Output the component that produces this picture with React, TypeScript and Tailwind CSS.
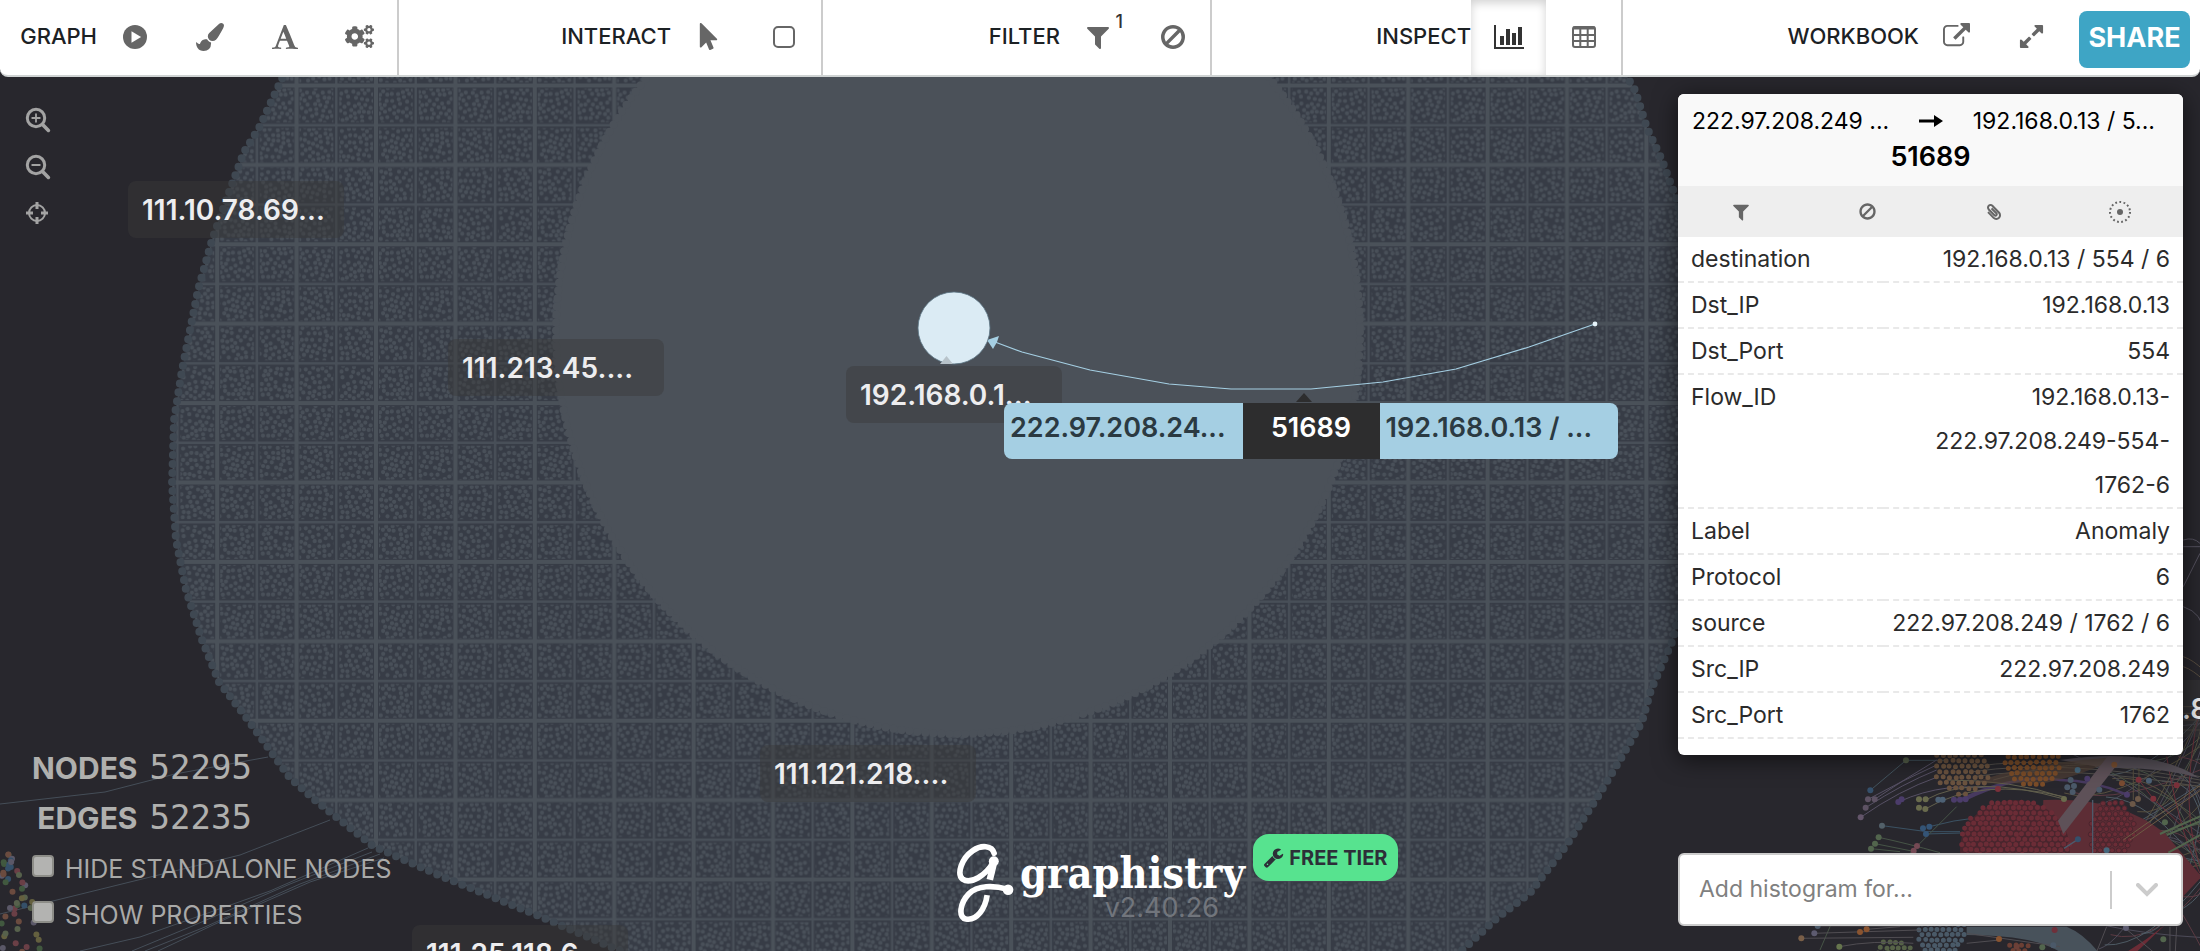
import type { ReactNode } from "react";
import { FaCogs, FaPaperclip } from "react-icons/fa";

/* ---------- icons ---------- */

const paths = {
  brush:
    "M1615 0q70 0 122.5 46.5t52.5 116.5q0 63-45 151-332 629-465 752-97 91-218 91-126 0-216.5-92.5t-90.5-219.5q0-128 92-212l638-579q59-54 130-54zm-909 1034q39 76 106.5 130t150.5 76l1 71q4 213-129.5 347t-348.5 134q-123 0-218-46.5t-152.5-127.5-86.5-183-29-220q7 5 41 30t62 44.5 59 36.5 46 17q41 0 55-37 25-66 57.5-112.5t69.5-76 88-47.5 103-25.5 125-10.5z",
  font: "M789 559l-170 450q33 0 136.5 2t160.5 2q19 0 57-2-87-253-184-452zm-725 1105l2-79q23-7 56-12.5t57-10.5 49.5-14.5 44.5-29 31-50.5l237-616 280-724h128q8 14 11 21l205 480q33 78 106 257.5t114 274.5q15 34 58 144.5t72 168.5q20 45 35 57 19 15 88 29.5t84 20.5q6 38 6 57 0 4-.5 13t-.5 13q-63 0-190-8t-191-8q-76 0-215 7t-178 8q0-43 4-78l131-28q1 0 12.5-2.5t15.5-3.5 14.5-4.5 15-6.5 11-8 9-11 2.5-14q0-16-31-96.5t-72-177.5-42-100l-450-2q-26 58-76.5 195.5t-50.5 162.5q0 22 14 37.5t43.5 24.5 48.5 13.5 57 8.5 41 4q1 19 1 58 0 9-2 27-58 0-174.5-10t-174.5-10q-8 0-26.5 4t-21.5 4q-80 14-188 14z",
  pointer:
    "M1453 1043q31 30 14 69-17 40-59 40h-382l201 476q10 25 0 49t-34 35l-177 75q-25 10-49 0t-35-34l-191-452-312 312q-19 19-45 19-12 0-24-5-40-17-40-59v-1504q0-42 40-59 12-5 24-5 27 0 45 19z",
  filter:
    "M1595 295q17 41-14 70l-493 493v742q0 42-39 59-13 5-25 5-27 0-45-19l-256-256q-19-19-19-45v-486l-493-493q-31-29-14-70 17-39 59-39h1280q42 0 59 39z",
  ban: "M1440 893q0-161-87-295l-754 753q137 89 297 89 111 0 211.5-43.5t173.5-116.5 116-174.5 43-212.5zm-999 299l755-754q-135-91-300-91-148 0-273 73t-198 199-73 274q0 162 89 299zm1223-299q0 157-61 300t-163.5 246-245 164-298.5 61-298.5-61-245-164-163.5-246-61-300 61-299.5 163.5-245.5 245-164 298.5-61 298.5 61 245 164 163.5 245.5 61 299.5z",
  external:
    "M1408 928v320q0 119-84.5 203.5t-203.5 84.5h-832q-119 0-203.5-84.5t-84.5-203.5v-832q0-119 84.5-203.5t203.5-84.5h704q14 0 23 9t9 23v64q0 14-9 23t-23 9h-704q-66 0-113 47t-47 113v832q0 66 47 113t113 47h832q66 0 113-47t47-113v-320q0-14 9-23t23-9h64q14 0 23 9t9 23zm384-864v512q0 26-19 45t-45 19-45-19l-176-176-652 652q-10 10-23 10t-23-10l-114-114q-10-10-10-23t10-23l652-652-176-176q-19-19-19-45t19-45 45-19h512q26 0 45 19t19 45z",
  expand:
    "M883 1056q0 13-10 23l-332 332 144 144q19 19 19 45t-19 45-45 19h-448q-26 0-45-19t-19-45v-448q0-26 19-45t45-19 45 19l144 144 332-332q10-10 23-10t23 10l114 114q10 10 10 23zm781-864v448q0 26-19 45t-45 19-45-19l-144-144-332 332q-10 10-23 10t-23-10l-114-114q-10-10-10-23t10-23l332-332-144-144q-19-19-19-45t19-45 45-19h448q26 0 45 19t19 45z",
  wrench:
    "M448 1472q0-26-19-45t-45-19-45 19-19 45 19 45 45 19 45-19 19-45zm644-420l-682 682q-37 37-90 37-52 0-91-37l-106-108q-38-36-38-90 0-53 38-91l681-681q39 98 114.5 173.5t173.5 114.5zm634-435q0 39-23 106-47 134-164.5 217.5t-258.5 83.5q-185 0-316.5-131.5t-131.5-316.5 131.5-316.5 316.5-131.5q58 0 121.5 16.5t107.5 46.5q16 11 16 28t-16 28l-293 169v224l193 107q5-3 79-48.5t135.5-81 70.5-35.5q15 0 23.5 10t8.5 25z",
};

function Glyph({ d, className }: { d: string; className: string }) {
  return (
    <svg viewBox="0 0 1792 1792" fill="currentColor" className={className} aria-hidden="true">
      <path d={d} />
    </svg>
  );
}

function PlayIcon() {
  return (
    <svg viewBox="0 0 24 24" className="size-6" aria-hidden="true">
      <circle cx="12" cy="12" r="12" fill="currentColor" />
      <path d="M8.5 6.2v11.6l9.6-5.8z" fill="#fff" />
    </svg>
  );
}

function SquareIcon() {
  return (
    <svg viewBox="0 0 22 22" className="size-[22px]" fill="none" stroke="currentColor" strokeWidth="2" aria-hidden="true">
      <rect x="1" y="1" width="20" height="20" rx="4" />
    </svg>
  );
}

function BarsIcon() {
  return (
    <svg viewBox="0 0 30 24" className="h-6 w-[30px]" fill="currentColor" aria-hidden="true">
      <path d="M0 0h2v22h28v2H0zM6 11h4v9H6zM12 4h4v16h-4zM18 8h4v12h-4zM24 2h4v18h-4z" />
    </svg>
  );
}

function TableIcon() {
  return (
    <svg viewBox="0 0 24 22" className="h-[22px] w-6" fill="none" stroke="currentColor" aria-hidden="true">
      <rect x="1" y="1" width="22" height="20" rx="2" strokeWidth="2" />
      <path d="M1 2h22" strokeWidth="3" />
      <path d="M8.3 3v18M15.7 3v18M1 9h22M1 15h22" strokeWidth="2" />
    </svg>
  );
}

function MagnifierIcon({ plus }: { plus?: boolean }) {
  return (
    <svg viewBox="0 0 26 26" className="size-[26px]" fill="none" stroke="currentColor" strokeLinecap="round" aria-hidden="true">
      <circle cx="11" cy="11" r="8.7" strokeWidth="3" />
      <path d="M17.8 17.8l5.6 5.6" strokeWidth="3.6" />
      <path d={plus ? "M7.2 11h7.6M11 7.2v7.6" : "M7.2 11h7.6"} strokeWidth="1.8" />
    </svg>
  );
}

function CrosshairIcon() {
  return (
    <svg viewBox="0 0 24 24" className="size-6" fill="none" stroke="currentColor" aria-hidden="true">
      <circle cx="12" cy="12" r="8" strokeWidth="2" />
      <path d="M12 1v7M12 16v7M1 12h7M16 12h7" strokeWidth="3" />
    </svg>
  );
}

function NeighborhoodIcon() {
  return (
    <svg viewBox="0 0 24 24" className="size-6" aria-hidden="true">
      <circle cx="12" cy="12" r="10" fill="none" stroke="currentColor" strokeWidth="2" strokeDasharray="1.8 2.4" />
      <circle cx="12" cy="12" r="3" fill="currentColor" />
    </svg>
  );
}

/* ---------- graph canvas ---------- */

function rng(seed: number) {
  let s = seed;
  return () => {
    s = (s * 1664525 + 1013904223) % 4294967296;
    return s / 4294967296;
  };
}

const dot = (x: number, y: number, r: number) =>
  `M${(x - r).toFixed(1)} ${y.toFixed(1)}a${r} ${r} 0 1 0 ${2 * r} 0a${r} ${r} 0 1 0 ${-2 * r} 0`;

const TILE = 158.8;

/* dart throwing on a torus, so that the tile repeats without seams */
function tileDots() {
  const rand = rng(7);
  const placed: [number, number][] = [];
  let d = "";
  for (let i = 0; i < 16000; i++) {
    const x = rand() * TILE;
    const y = rand() * TILE;
    const free = placed.every(([px, py]) => {
      const ax = Math.abs(px - x);
      const ay = Math.abs(py - y);
      const dx = Math.min(ax, TILE - ax);
      const dy = Math.min(ay, TILE - ay);
      return dx * dx + dy * dy > 20;
    });
    if (free) {
      placed.push([x, y]);
      d += dot(x, y, 2.1);
    }
  }
  return d;
}

function clusterDots(cx: number, cy: number, rx: number, ry: number, gap: number, r: number, seed: number) {
  const rand = rng(seed);
  let d = "";
  for (let y = -ry, row = 0; y <= ry; y += gap * 0.87, row++) {
    for (let x = -rx + (row % 2 ? gap / 2 : 0); x <= rx; x += gap) {
      if ((x * x) / (rx * rx) + (y * y) / (ry * ry) <= 1) {
        d += dot(cx + x + (rand() - 0.5) * 3, cy + y + (rand() - 0.5) * 3, r);
      }
    }
  }
  return d;
}

const TILE_DOTS = tileDots();
const GRID = "M0 0H158.8M0 39.7H158.8M0 79.4H158.8M0 119.1H158.8M0 158.8H158.8M0 0V158.8M39.7 0V158.8M79.4 0V158.8M119.1 0V158.8M158.8 0V158.8";
const GRID_MAIN = "M0 0H158.8M0 79.4H158.8M0 158.8H158.8M0 0V158.8M79.4 0V158.8M158.8 0V158.8";

const BLOB =
  "M286 70L272 100L259 128L244 152L228 195L212 240L198 290L182 370L174 420L172 484L176 540L186 590L202 640L219 682L248 720L290 778L316 801L373 846L436 874L539 916L632 956H1456L1497 918L1530 893L1566 846L1597 798L1620 760L1642 722L1651 690L1673 640L1697 540L1703 420L1697 300L1677 200L1662 160L1647 128L1635 90L1623 70Z";

const SMALL_NODES: [number, number, string][] = [
  [438, 181, "#56614b"], [331, 271, "#35506b"], [324, 298, "#5d5263"], [344, 298, "#5d5263"], [317, 323, "#5d5263"],
  [302, 352, "#63556a"], [415, 306, "#4b3c6a"], [425, 298, "#4b3c6a"], [477, 298, "#696b4d"], [497, 298, "#696b4d"],
  [477, 323, "#696b4d"], [496, 327, "#696b4d"], [535, 299, "#4d6175"], [548, 299, "#4d6175"], [582, 299, "#4b3c6a"],
  [600, 299, "#4b3c6a"], [617, 298, "#4b3c6a"], [366, 377, "#526069"], [489, 385, "#345476"], [508, 380, "#345476"],
  [498, 402, "#345476"], [356, 412, "#52654d"], [345, 431, "#52654d"], [333, 446, "#52654d"], [471, 438, "#754954"],
  [461, 452, "#754954"], [714, 267, "#7b303a"], [912, 297, "#696b4d"], [932, 240, "#4b5969"], [922, 262, "#4b5969"],
  [942, 258, "#4b5969"], [938, 276, "#4b5969"], [953, 210, "#45667b"], [982, 236, "#4b3c6a"], [1018, 269, "#4b5969"],
  [1086, 250, "#7a4c32"], [1101, 284, "#4b3c6a"], [1136, 239, "#7b303a"], [1167, 242, "#4d6175"], [1134, 297, "#6c5848"],
  [1118, 312, "#6c5848"], [1180, 296, "#7b303a"], [1250, 256, "#7b303a"], [1215, 367, "#52654d"], [1063, 194, "#7a5032"],
  [954, 418, "#35506b"], [1040, 451, "#45667b"], [173, 678, "#4b5969"], [163, 700, "#5d5b70"], [124, 715, "#7a5f48"],
  [300, 696, "#8a5430"], [320, 688, "#8a5430"], [238, 740, "#66754d"], [884, 690, "#6f303a"], [717, 717, "#8a5430"],
  [770, 740, "#6c4038"], [847, 742, "#52654d"], [880, 736, "#4b5969"], [1098, 684, "#5d5b70"], [1210, 718, "#52654d"],
];

const NODE_TINTS = ["#5b5868", "#57614c", "#6b4b3f", "#41583f", "#355069", "#64603f", "#6a3f46"];

function LeftSpeckles() {
  const rand = rng(31);
  const items: ReactNode[] = [];
  for (let i = 0; i < 46; i++) {
    const y = 850 + rand() * 104;
    const x = rand() * Math.min(40, 8 + (y - 850) * 0.5);
    items.push(<circle key={i} cx={x.toFixed(1)} cy={y.toFixed(1)} r="3" fill={NODE_TINTS[i % NODE_TINTS.length]} />);
  }
  return <>{items}</>;
}

function RightEdges() {
  const rand = rng(11);
  const tints = ["#4c4a57", "#4d5a63", "#5b3a42", "#4a5548", "#57503f"];
  const items: ReactNode[] = [];
  for (let i = 0; i < 46; i++) {
    const x1 = 900 + rand() * 420;
    const y1 = 150 + rand() * 600;
    items.push(
      <path
        key={i}
        d={`M${x1.toFixed(0)} ${y1.toFixed(0)}Q${(x1 + 130).toFixed(0)} ${(y1 - 60 + rand() * 120).toFixed(0)} 1330 ${(rand() * 760).toFixed(0)}`}
        stroke={tints[i % tints.length]}
      />,
    );
  }
  return <>{items}</>;
}

function GraphCanvas() {
  return (
    <svg
      viewBox="0 76 2200 875"
      preserveAspectRatio="xMidYMin slice"
      className="absolute inset-0 size-full"
      role="img"
      aria-label="Network graph"
    >
      <defs>
        <pattern id="nodes" x="376" y="85.5" width={TILE} height={TILE} patternUnits="userSpaceOnUse">
          <rect width={TILE} height={TILE} fill="#373c46" />
          <path d={TILE_DOTS} fill="#495059" />
          <path d={GRID} stroke="#373c46" strokeWidth="6" />
          <path d={GRID} stroke="#484f58" strokeWidth="2.4" />
          <path d={GRID_MAIN} stroke="#4a5159" strokeWidth="4" />
        </pattern>
      </defs>
      <rect y="76" width="2200" height="875" fill="#28272d" />

      {/* faint long edges, lower left */}
      <g fill="none" stroke="#454e58" strokeWidth="1">
        <path d="M0 804L105 792L175 774L268 757M0 914L130 882L240 855L330 820M80 951L140 937L270 891L368 848M132 951L190 927L290 884L372 852M145 951L205 927L300 884L380 854M158 951L230 917L310 882L384 858" />
      </g>
      <LeftSpeckles />

      <path d={BLOB} fill="url(#nodes)" />
      <path d={BLOB} fill="none" stroke="#3f4852" strokeWidth="8" strokeLinecap="round" strokeDasharray="0 9" />

      <circle cx="958" cy="332" r="403" fill="#4b5159" />
      <circle cx="958" cy="332" r="402" fill="none" stroke="#4b5159" strokeWidth="8" strokeLinecap="round" strokeDasharray="0 8" />

      {/* neighbouring communities behind the inspector */}
      <g transform="translate(1760 700) scale(0.3333)">
        <g fill="none" strokeWidth="3">
          <path d="M1270 -480Q1300 -490 1320 -470M1270 -460H1320M1270 -340L1320 -440M1270 -280Q1330 -260 1330 -200" stroke="#55525f" />
          <path d="M1270 -130Q1300 -120 1330 -90M1270 -100Q1300 -90 1330 -60M1270 20H1330M1270 40H1330M1270 60H1330M1270 90H1330" stroke="#574c40" />
          <RightEdges />
          <path d="M331 271L438 181H560" stroke="#43545e" />
          <path d="M302 352Q420 270 530 232M317 323Q430 250 530 210M324 298Q430 240 530 195M344 298Q430 240 530 180M415 306Q560 240 720 270" stroke="#565064" />
          <path d="M600 299Q760 220 900 240Q1000 240 1101 284M617 298Q760 230 860 236" stroke="#47395f" strokeWidth="7" />
          <path d="M496 300Q640 220 912 297M496 327Q660 230 912 290M560 240Q760 240 905 290" stroke="#615f4c" />
          <path d="M366 377L500 395H600M508 380Q580 360 660 352M498 402L640 398" stroke="#3b5263" />
          <path d="M356 412Q440 430 540 458M345 431L470 456M333 446L420 455M590 320L440 470M240 610L180 750" stroke="#465446" />
          <path d="M640 200Q900 160 1320 240M640 215Q900 175 1320 250M640 230Q900 190 1320 260M700 240Q1000 150 1320 230" stroke="#514e4a" />
          <path d="M1120 170V300M1137 170V300" stroke="#57503f" />
          <path d="M1320 20Q1250 340 1330 520M1220 170Q1260 400 1320 520M1180 296L1320 430M1136 239L1180 296" stroke="#693039" />
        </g>
        <path d="M900 180Q1180 140 1320 235Q1200 200 1040 205Z" fill="#565058" />
        <path d="M640 250Q780 190 1080 170Q960 230 850 250Z" fill="#574537" opacity="0.6" />
        <path d={clusterDots(605, 200, 84, 84, 19, 7.5, 3)} fill="#6b533f" />
        <path d={clusterDots(815, 182, 90, 78, 19, 7.5, 4)} fill="#7a4c28" />
        <path d="M850 300Q1080 290 1215 400L1325 530L1250 610H840Z" fill="#5d2d35" />
        <ellipse cx="765" cy="450" rx="165" ry="150" fill="#48252d" />
        <path d={clusterDots(765, 450, 168, 158, 18, 7.5, 5)} fill="#6b2c36" />
        <path d={clusterDots(1055, 390, 70, 96, 18, 7.5, 6)} fill="#6b2c36" stroke="#48252d" strokeWidth="3" />
        <path d="M894 362L1042 170H1090L910 402Z" fill="#5e5158" />
        <path d="M998 300V460M912 445L954 418" fill="none" stroke="#4d5a6b" strokeWidth="4" />
        <path d="M1330 345L1200 402M1330 360L1220 405M1330 400L1225 458" fill="none" stroke="#52654d" strokeWidth="6" />
        <path d="M1090 420L1330 250M1110 420L1330 265" fill="none" stroke="#6d5b44" strokeWidth="3" />

        <path d="M620 680H920Q970 700 1015 756H900Q820 705 620 705Z" fill="#48525b" />
        <path d={clusterDots(545, 690, 76, 80, 18, 7.5, 8)} fill="#4a5a68" />
        <path d={clusterDots(400, 760, 56, 48, 18, 7.5, 9)} fill="#566247" />
        <path d={clusterDots(775, 745, 34, 24, 18, 7.5, 10)} fill="#6c3f34" />
        <path d="M1100 756Q1160 720 1215 675L1130 756Z" fill="#6b2c36" />
        <path
          d="M173 678H480M163 700L480 690M124 715L460 712M320 688L420 680M238 740Q340 720 460 730M620 700L900 740M620 730L720 720M1010 756L1040 680M1180 756L1090 680M1230 756V680M1246 756L1250 680"
          fill="none"
          stroke="#504d52"
          strokeWidth="3"
        />
        {SMALL_NODES.map(([x, y, c]) => (
          <circle key={`${x}-${y}`} cx={x} cy={y} r="9" fill={c} />
        ))}
      </g>

      {/* selected edge */}
      <path
        d="M995 342L1022 352L1090 370L1169 384L1231 389H1311L1383 382L1456 369L1529 347L1595 324"
        fill="none"
        stroke="#a5cfe3"
        strokeWidth="1.2"
      />
      <path d="M987 340L999 336L997 342L993 349Z" fill="#a5cfe3" />
      <circle cx="1595" cy="324" r="2.4" fill="#e6f3fa" />
      <circle cx="954" cy="328" r="36" fill="#dbebf4" stroke="#5d7685" strokeWidth="0.8" />
      <path d="M940 364L946.500 356L953 364Z" fill="#b8c3ca" />
      <path d="M1296 402L1304 393L1312 402Z" fill="#2d2d2e" />
    </svg>
  );
}

function NodeLabel({ className, children }: { className: string; children: ReactNode }) {
  return (
    <div
      className={`absolute flex h-[57px] w-[216px] items-center rounded-lg bg-[#3a3a3a]/45 px-[14px] text-[28px] font-semibold whitespace-nowrap text-[#ededef] ${className}`}
    >
      {children}
    </div>
  );
}

/* ---------- toolbar ---------- */

function ToolGroup({ label, children, last }: { label: string; children: ReactNode; last?: boolean }) {
  return (
    <div className={`flex items-stretch justify-end ${last ? "" : "border-r-2 border-[#cccccc]"}`}>
      <span className="flex items-center pb-[2px] text-[22px] font-medium text-[#1c2124]">{label}</span>
      {children}
    </div>
  );
}

function Tool({ name, active, children }: { name: string; active?: boolean; children: ReactNode }) {
  return (
    <button
      type="button"
      aria-label={name}
      className={`relative flex w-[75px] items-center justify-center pb-[2px] ${
        active ? "text-[#333333] shadow-[inset_0_3px_10px_rgba(0,0,0,0.18)]" : "text-[#666666]"
      }`}
    >
      {children}
    </button>
  );
}

function Toolbar() {
  return (
    <header className="relative z-10 grid h-[77px] grid-cols-[399fr_424fr_389fr_411fr_577fr] rounded-b-lg border-b-2 border-[#cfd3d3] bg-white">
      <ToolGroup label="GRAPH">
        <Tool name="Play"><PlayIcon /></Tool>
        <Tool name="Appearance"><Glyph d={paths.brush} className="size-7" /></Tool>
        <Tool name="Labels"><Glyph d={paths.font} className="size-7" /></Tool>
        <Tool name="Settings"><FaCogs className="size-[29px]" /></Tool>
      </ToolGroup>
      <ToolGroup label="INTERACT">
        <Tool name="Select"><Glyph d={paths.pointer} className="size-[27px]" /></Tool>
        <Tool name="Marquee"><SquareIcon /></Tool>
      </ToolGroup>
      <ToolGroup label="FILTER">
        <Tool name="Filters">
          <Glyph d={paths.filter} className="size-7" />
          <span className="absolute top-[14px] right-3 text-[18px] leading-4 font-medium text-[#333333]">1</span>
        </Tool>
        <Tool name="Exclusions"><Glyph d={paths.ban} className="size-7" /></Tool>
      </ToolGroup>
      <ToolGroup label="INSPECT">
        <Tool name="Histograms" active><BarsIcon /></Tool>
        <Tool name="Table"><TableIcon /></Tool>
      </ToolGroup>
      <ToolGroup label="WORKBOOK" last>
        <Tool name="Open in new window"><Glyph d={paths.external} className="size-[27px]" /></Tool>
        <Tool name="Full screen"><Glyph d={paths.expand} className="size-[27px]" /></Tool>
        <button
          type="button"
          className="mx-[10px] mt-[11px] h-[57px] w-[111px] rounded-lg bg-[#3ea5c5] pb-[2px] text-[27px] font-bold text-white"
        >
          SHARE
        </button>
      </ToolGroup>
    </header>
  );
}

/* ---------- side panels ---------- */

const rows: [string, string][] = [
  ["destination", "192.168.0.13 / 554 / 6"],
  ["Dst_IP", "192.168.0.13"],
  ["Dst_Port", "554"],
  ["Flow_ID", "192.168.0.13-222.97.208.249-554-1762-6"],
  ["Label", "Anomaly"],
  ["Protocol", "6"],
  ["source", "222.97.208.249 / 1762 / 6"],
  ["Src_IP", "222.97.208.249"],
  ["Src_Port", "1762"],
];

function Inspector() {
  const action = "flex flex-1 items-center justify-center text-[#666666]";
  return (
    <section className="overflow-hidden rounded-md bg-white pb-4 text-[23px] text-[#2b2b2b] shadow-[0_4px_24px_rgba(0,0,0,0.6)]">
      <div className="h-[92px] bg-[#f9f9f9] px-[14px] pt-3 text-black">
        <div className="flex items-center justify-between leading-[30px]">
          <span>222.97.208.249 ...</span>
          <svg viewBox="0 0 24 14" className="h-[14px] w-6" aria-label="to">
            <path d="M0 5.500h15V1l9 6-9 6V8.500H0z" fill="#000" />
          </svg>
          <span className="pr-[14px]">192.168.0.13 / 5...</span>
        </div>
        <h2 className="text-center text-[27px] leading-[42px] font-semibold">51689</h2>
      </div>
      <div className="flex h-[51px] bg-[#eeeeee]">
        <button type="button" aria-label="Filter" className={action}><Glyph d={paths.filter} className="size-5" /></button>
        <button type="button" aria-label="Exclude" className={action}><Glyph d={paths.ban} className="size-[19px]" /></button>
        <button type="button" aria-label="Attach" className={action}><FaPaperclip className="size-4 -scale-x-100" /></button>
        <button type="button" aria-label="Neighborhood" className={action}><NeighborhoodIcon /></button>
      </div>
      <table className="w-full table-fixed leading-[44px]">
        <tbody>
          {rows.map(([key, value]) => (
            <tr key={key} className="border-b-2 border-dashed border-[#e9e9e9]">
              <th scope="row" className="pl-[13px] text-left align-top font-normal">{key}</th>
              <td className={`w-[300px] pr-[13px] text-right ${key === "Flow_ID" ? "pl-6" : ""}`}>{value}</td>
            </tr>
          ))}
        </tbody>
      </table>
    </section>
  );
}

function HistogramPicker() {
  return (
    <label className="relative block">
      <span className="sr-only">Histogram attribute</span>
      <select
        defaultValue=""
        className="h-[73px] w-full appearance-none rounded-md border-2 border-[#cccccc] bg-white px-[19px] text-[23px] text-[#808080]"
      >
        <option value="">Add histogram for...</option>
      </select>
      <span className="pointer-events-none absolute inset-y-0 right-[25px] flex items-center gap-6">
        <span className="h-[38px] w-[2px] bg-[#cccccc]" />
        <svg viewBox="0 0 22 14" className="h-[14px] w-[22px]" fill="none" stroke="#cccccc" strokeWidth="4" strokeLinecap="round" aria-hidden="true">
          <path d="M2 2l9 9 9-9" />
        </svg>
      </span>
    </label>
  );
}

function Toggle({ label }: { label: string }) {
  return (
    <label className="flex h-[46px] items-start gap-[11px] text-[25px] leading-7 text-[#a9a9a8]">
      <input type="checkbox" className="size-[22px] appearance-none rounded-sm border-2 border-[#8d8d88] bg-[#b3b3b1]" />
      {label}
    </label>
  );
}

function Stats() {
  const number = "pl-3 font-['DejaVu_Sans_Mono',monospace] text-[34px] font-normal";
  return (
    <div className="pl-8 text-[#b0b0ae]">
      <dl className="grid w-max grid-cols-[auto_auto] items-baseline text-right text-[30px] leading-[49px] font-bold">
        <dt>NODES</dt>
        <dd className={number}>52295</dd>
        <dt>EDGES</dt>
        <dd className={number}>52235</dd>
      </dl>
      <div className="pt-3">
        <Toggle label="HIDE STANDALONE NODES" />
        <Toggle label="SHOW PROPERTIES" />
      </div>
    </div>
  );
}

function Brand() {
  return (
    <div className="absolute bottom-[28px] left-[955px] flex items-start">
      <svg viewBox="34 48 182 244" className="mt-[8px] h-[81px] w-[61px]" fill="none" stroke="#fff" strokeLinecap="round" aria-hidden="true">
        <path d="M151 82C145 58 112 56 87 74C52 98 38 145 56 160C80 176 126 150 150 106" strokeWidth="17" />
        <path d="M152 104L138 162" strokeWidth="20" strokeLinecap="butt" />
        <circle cx="150" cy="106" r="15" fill="#fff" stroke="none" />
        <path d="M190 190C150 178 100 178 75 204C48 232 42 274 66 280C100 286 124 248 130 208" strokeWidth="17" strokeLinecap="butt" />
        <circle cx="193" cy="192" r="16" fill="#fff" stroke="none" />
      </svg>
      <div className="mt-[14px] pl-1 text-right">
        <div className="font-['DejaVu_Serif_Condensed','DejaVu_Serif',serif] text-[43px] leading-[50px] font-bold text-white">graphistry</div>
        <div className="-mt-1 pr-[26px] text-[27px] leading-7 text-[#71757c]">v2.40.26</div>
      </div>
      <span className="ml-2 flex h-[47px] w-[145px] items-center justify-center gap-[5px] rounded-2xl bg-[#57e38f] text-[20px] font-bold whitespace-nowrap text-[#2d2f38]">
        <Glyph d={paths.wrench} className="size-[21px]" />
        FREE TIER
      </span>
    </div>
  );
}

export default function App() {
  return (
    <div className="flex min-h-screen flex-col bg-[#28272d] font-['Inter','Liberation_Sans',sans-serif]">
      <Toolbar />
      <main className="relative -mt-px flex flex-1 justify-between overflow-hidden">
        <GraphCanvas />

        <NodeLabel className="top-[105px] left-[128px]">111.10.78.69...</NodeLabel>
        <NodeLabel className="top-[263px] left-[448px]">111.213.45....</NodeLabel>
        <NodeLabel className="top-[290px] left-[846px]">192.168.0.1...</NodeLabel>
        <NodeLabel className="top-[669px] left-[760px]">111.121.218....</NodeLabel>
        <NodeLabel className="top-[849px] left-[412px]">111.25.118.6...</NodeLabel>
        <NodeLabel className="top-[604px] left-[2168px]">.8</NodeLabel>

        <div className="absolute top-[327px] left-[1004px] flex h-[56px] w-[614px] overflow-hidden rounded-lg bg-[#a5cfe3] text-[27px] leading-[50px] font-semibold text-[#2b3a42]">
          <span className="flex-1 pl-[6px] whitespace-nowrap">222.97.208.24...</span>
          <span className="w-[137px] bg-[#2d2d2e] text-center text-white">51689</span>
          <span className="flex-1 pl-[6px] whitespace-nowrap">192.168.0.13 / ...</span>
        </div>

        <div className="relative flex flex-col justify-between pb-1">
          <nav aria-label="Zoom" className="flex flex-col gap-[21px] pt-[31px] pl-[25px] text-[#a3a3a3]">
            <button type="button" aria-label="Zoom in"><MagnifierIcon plus /></button>
            <button type="button" aria-label="Zoom out"><MagnifierIcon /></button>
            <button type="button" aria-label="Center"><CrosshairIcon /></button>
          </nav>
          <Stats />
        </div>

        <Brand />

        <aside className="relative mr-[17px] flex w-[505px] flex-col justify-between pt-[18px] pb-[25px]">
          <Inspector />
          <HistogramPicker />
        </aside>
      </main>
    </div>
  );
}
